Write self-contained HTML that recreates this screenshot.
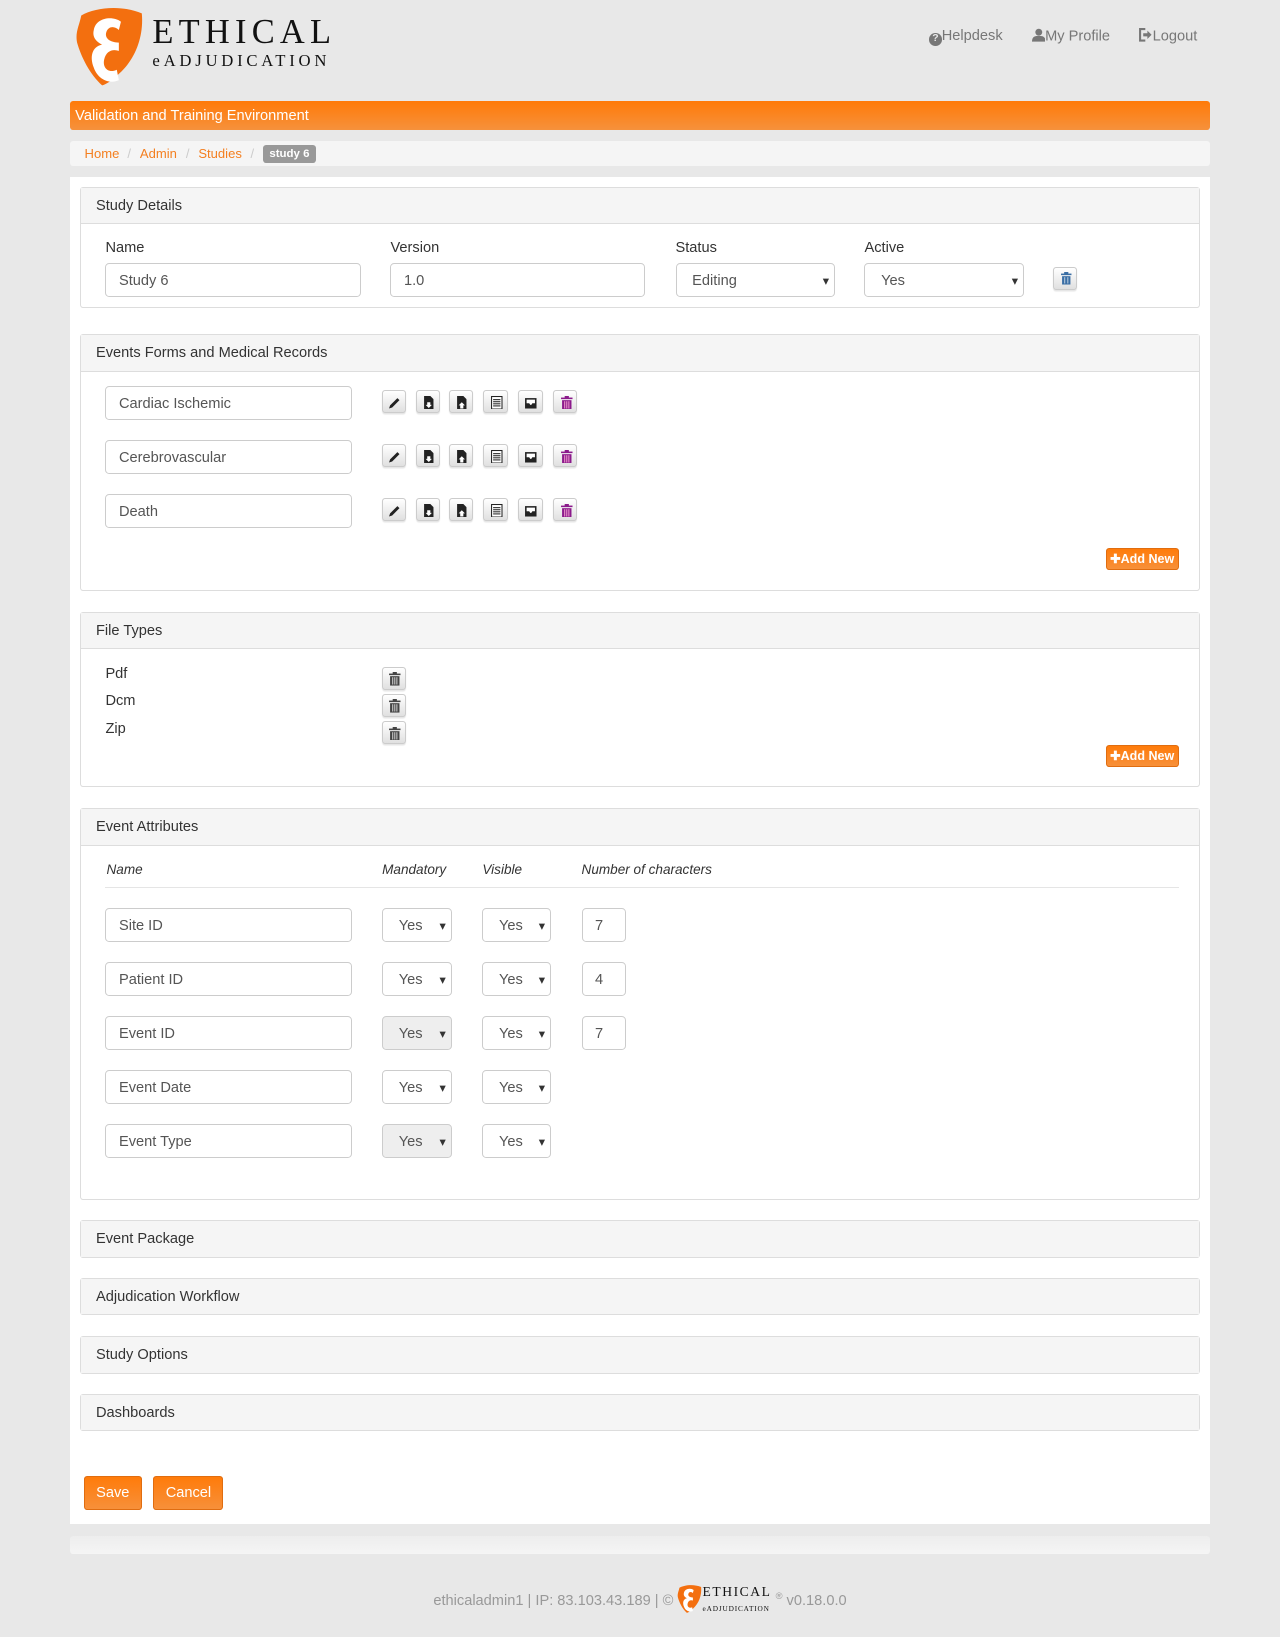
<!DOCTYPE html>
<html><head><meta charset="utf-8">
<style>
html,body{margin:0;padding:0;background:#e8e8e8;}
body{width:1280px;height:1637px;overflow:hidden;font-family:"Liberation Sans",sans-serif;}
#w{position:relative;width:1226px;height:1568px;zoom:1.04405;}
.a{position:absolute;}
.t{font-size:14px;color:#333;}
.panel{position:absolute;left:77px;width:1070px;border:1px solid #ddd;border-radius:3px;background:#fff;}
.ph{height:34px;background:#f5f5f5;border-bottom:1px solid #ddd;font-size:14px;color:#333;line-height:35px;padding-left:14px;}
.col .ph{border-bottom:none;}
.inp{position:absolute;border:1px solid #ccc;border-radius:4px;background:#fff;font-size:14px;color:#555;line-height:30px;padding-top:2px;padding-left:12px;box-sizing:border-box;height:32px;}
.sel:after{content:"▾";position:absolute;right:5px;top:2px;font-size:12px;color:#333;}
.dis{background:#eee;}
.btn{position:absolute;width:23px;height:22px;border:1px solid #ccc;border-radius:3px;background:linear-gradient(#fff,#e0e0e0);box-sizing:border-box;box-shadow:0 1px 1px rgba(0,0,0,.1);}
.btn svg{position:absolute;left:5px;top:4px;}
.add{position:absolute;left:1059px;width:70px;height:21px;background:linear-gradient(#ff7b0a,#f7903a);border:1px solid #e06d10;border-radius:3px;box-sizing:border-box;color:#fff;font-size:12px;font-weight:bold;line-height:20px;text-align:center;}
.ob{position:absolute;top:1414px;height:32px;background:linear-gradient(#ff7b0a,#f7903a);border:1px solid #e06d10;border-radius:3px;box-sizing:border-box;color:#fff;font-size:14px;line-height:32px;text-align:center;}
.it{position:absolute;top:826px;font-size:13px;font-style:italic;color:#333;}
</style></head><body><div id="w">
<svg class="a" style="left:72px;top:5px" width="66" height="78" viewBox="0 0 66 78">
<path d="M6 10 C20 2 45 0 64 8 C66 30 58 52 42 66 C36 72 30 76 26 77 C14 66 6 50 2 36 C0 26 4 20 6 10Z" fill="#f36f0f"/>
<path d="M44 16 C36 10 20 12 18 24 C16 32 22 36 26 38 C16 40 14 50 18 60 C22 72 34 76 42 72 L40 62 C32 66 26 60 28 52 C30 44 36 42 42 44 L42 36 C34 36 28 32 30 26 C32 20 38 20 42 24Z" fill="#fff"/>
</svg>
<div class="a" style="left:146px;top:12px;font-family:'Liberation Serif',serif;font-size:33px;letter-spacing:5px;color:#111;">ETHICAL</div>
<div class="a" style="left:146px;top:49px;font-family:'Liberation Serif',serif;font-size:16px;letter-spacing:3.6px;color:#111;">eADJUDICATION</div>
<div class="a" style="left:890px;top:27px;font-size:14px;color:#777;"><span style="display:inline-block;width:12px;height:12px;border-radius:50%;background:#777;color:#e8e8e8;font-size:10px;font-weight:bold;line-height:12px;text-align:center;vertical-align:-1px">?</span>Helpdesk</div>
<div class="a" style="left:988px;top:27px;font-size:14px;color:#777;"><svg width="13" height="13" viewBox="0 0 13 13" style="vertical-align:-1px"><circle cx="6.5" cy="4" r="3.3" fill="#777"/><path d="M0 13 C0 8 3 7.5 6.5 7.5 C10 7.5 13 8 13 13Z" fill="#777"/></svg>My Profile</div>
<div class="a" style="left:1090px;top:27px;font-size:14px;color:#777;"><svg width="14" height="13" viewBox="0 0 14 13" style="vertical-align:-1px"><path d="M7 1 H2 V12 H7" stroke="#777" stroke-width="2" fill="none"/><path d="M5 5 H9 V2.5 L13 6.5 L9 10.5 V8 H5Z" fill="#777"/></svg>Logout</div>
<div class="a" style="left:67px;top:97px;width:1092px;height:28px;border-radius:3px;background:linear-gradient(#ff7a08,#f6913c);color:#fff;font-size:14px;line-height:29px;text-indent:5px;">Validation and Training Environment</div>
<div class="a" style="left:67px;top:135px;width:1092px;height:24px;border-radius:3px;background:#f5f5f5;font-size:12.5px;line-height:24px;">
<span style="position:absolute;left:14px;color:#f47f20">Home</span><span style="position:absolute;left:55px;color:#ccc">/</span>
<span style="position:absolute;left:67px;color:#f47f20">Admin</span><span style="position:absolute;left:111px;color:#ccc">/</span>
<span style="position:absolute;left:123px;color:#f47f20">Studies</span><span style="position:absolute;left:173px;color:#ccc">/</span>
<span style="position:absolute;left:185px;top:4px;height:17px;line-height:18px;padding:0 6px;background:#999;border-radius:3px;color:#fff;font-weight:bold;font-size:11px">study 6</span></div>
<div class="a" style="left:67px;top:170px;width:1092px;height:1290px;background:#fff;"></div>

<div class="panel" style="top:179px;height:114px"><div class="ph">Study Details</div></div>
<div class="a t" style="left:101px;top:230px">Name</div>
<div class="a t" style="left:374px;top:230px">Version</div>
<div class="a t" style="left:647px;top:230px">Status</div>
<div class="a t" style="left:828px;top:230px">Active</div>
<div class="inp" style="left:101px;top:252px;width:245px">Study 6</div>
<div class="inp" style="left:374px;top:252px;width:244px">1.0</div>
<div class="inp sel" style="left:647px;top:252px;width:153px;padding-left:15px">Editing</div>
<div class="inp sel" style="left:828px;top:252px;width:153px;padding-left:15px">Yes</div>
<div class="btn" style="left:1009px;top:256px"><svg width="12" height="13" viewBox="0 0 12 13"><rect x="1" y="1.5" width="10" height="1.5" fill="#3a6ea5"/><rect x="4" y="0" width="4" height="2" fill="#3a6ea5"/><rect x="2" y="4" width="8" height="8" fill="#3a6ea5"/><rect x="4" y="5" width="1" height="6" fill="#bcd"/><rect x="7" y="5" width="1" height="6" fill="#bcd"/></svg></div>

<div class="panel" style="top:320px;height:244px"><div class="ph">Events Forms and Medical Records</div></div>
<div id="ev"></div>
<div class="add" style="top:525px">✚Add New</div>

<div class="panel" style="top:586px;height:166px"><div class="ph">File Types</div></div>
<div class="a t" style="left:101px;top:638px">Pdf</div>
<div class="a t" style="left:101px;top:664px">Dcm</div>
<div class="a t" style="left:101px;top:691px">Zip</div>
<div id="ft"></div>
<div class="add" style="top:714px">✚Add New</div>

<div class="panel" style="top:774px;height:373px"><div class="ph">Event Attributes</div></div>
<div class="it" style="left:102px">Name</div>
<div class="it" style="left:366px">Mandatory</div>
<div class="it" style="left:462px">Visible</div>
<div class="it" style="left:557px">Number of characters</div>
<div class="a" style="left:101px;top:850px;width:1028px;height:1px;background:#e5e5e5"></div>
<div id="ea"></div>

<div class="panel col" style="top:1169px;height:34px"><div class="ph">Event Package</div></div>
<div class="panel col" style="top:1224px;height:34px"><div class="ph">Adjudication Workflow</div></div>
<div class="panel col" style="top:1280px;height:34px"><div class="ph">Study Options</div></div>
<div class="panel col" style="top:1335px;height:34px"><div class="ph">Dashboards</div></div>

<div class="ob" style="left:80px;width:56px">Save</div>
<div class="ob" style="left:147px;width:67px">Cancel</div>

<div class="a" style="left:67px;top:1471px;width:1092px;height:17px;border-radius:3px;background:linear-gradient(#ededed,#f5f5f5)"></div>

<div class="a" style="left:0;top:1517px;width:1226px;text-align:center;font-size:14px;color:#999;">ethicaladmin1 | IP: 83.103.43.189 | © <svg width="24" height="28" viewBox="0 0 66 78" style="vertical-align:-8px"><path d="M6 10 C20 2 45 0 64 8 C66 30 58 52 42 66 C36 72 30 76 26 77 C14 66 6 50 2 36 C0 26 4 20 6 10Z" fill="#f36f0f"/><path d="M44 16 C36 10 20 12 18 24 C16 32 22 36 26 38 C16 40 14 50 18 60 C22 72 34 76 42 72 L40 62 C32 66 26 60 28 52 C30 44 36 42 42 44 L42 36 C34 36 28 32 30 26 C32 20 38 20 42 24Z" fill="#fff"/></svg><span style="display:inline-block;vertical-align:-6px;line-height:1;text-align:left;font-family:'Liberation Serif',serif;color:#111"><span style="font-size:13px;letter-spacing:1.5px">ETHICAL</span><br><span style="font-size:7px;letter-spacing:.8px">eADJUDICATION</span></span> <sup style="font-size:9px">®</sup> v0.18.0.0</div>
</div>
<script>
var icons=[
'<path d="M1 12 L2 9 L9 2 L11 4 L4 11Z" fill="#222"/>',
'<path d="M2 0 H8 L11 3 V13 H2Z" fill="#222"/><path d="M5 6 H8 V8.5 H9.5 L6.5 11.5 L3.5 8.5 H5Z" fill="#fff"/>',
'<path d="M2 0 H8 L11 3 V13 H2Z" fill="#222"/><path d="M5 12 H8 V9 H9.5 L6.5 6 L3.5 9 H5Z" fill="#fff"/>',
'<rect x="1" y="0" width="11" height="13" fill="#222"/><rect x="2" y="1" width="9" height="11" fill="#fff"/><rect x="3" y="3" width="7" height="1" fill="#222"/><rect x="3" y="5" width="7" height="1" fill="#222"/><rect x="3" y="7" width="7" height="1" fill="#222"/><rect x="3" y="9" width="7" height="1" fill="#222"/>',
'<path d="M1 2 H12 V12 H1Z" fill="#222"/><path d="M2.5 3.5 H10.5 V7 H8 L7 8.5 H6 L5 7 H2.5Z" fill="#fff"/>',
'<rect x="1" y="1.5" width="11" height="1.5" fill="#8b1a8b"/><rect x="4.5" y="0" width="4" height="2" fill="#8b1a8b"/><rect x="2" y="4" width="9" height="9" fill="#8b1a8b"/><rect x="4" y="5" width="1" height="7" fill="#e9c"/><rect x="6" y="5" width="1" height="7" fill="#e9c"/><rect x="8" y="5" width="1" height="7" fill="#e9c"/>'];
var bx=[366,398,430,463,496,530];
var names=['Cardiac Ischemic','Cerebrovascular','Death'];var h='';
names.forEach(function(n,i){var y=370+i*51.7;
h+='<div class="inp" style="left:101px;top:'+y+'px;width:236px">'+n+'</div>';
bx.forEach(function(x,j){h+='<div class="btn" style="left:'+x+'px;top:'+(y+4)+'px;width:'+(j==3||j==4?24:23)+'px"><svg width="13" height="13" viewBox="0 0 13 13">'+icons[j]+'</svg></div>';});});
document.getElementById('ev').outerHTML=h;
h='';[639,665,691].forEach(function(y){h+='<div class="btn" style="left:366px;top:'+y+'px"><svg width="13" height="13" viewBox="0 0 13 13"><rect x="1" y="1.5" width="11" height="1.5" fill="#444"/><rect x="4.5" y="0" width="4" height="2" fill="#444"/><rect x="2" y="4" width="9" height="9" fill="#444"/><rect x="4" y="5" width="1" height="7" fill="#ccc"/><rect x="6" y="5" width="1" height="7" fill="#ccc"/><rect x="8" y="5" width="1" height="7" fill="#ccc"/></svg></div>';});
document.getElementById('ft').outerHTML=h;
var rows=[['Site ID',0,'7'],['Patient ID',0,'4'],['Event ID',1,'7'],['Event Date',0,null],['Event Type',1,null]];h='';
rows.forEach(function(r,i){var y=870+i*51.7;
h+='<div class="inp" style="left:101px;top:'+y+'px;width:236px">'+r[0]+'</div>';
h+='<div class="inp sel'+(r[1]?' dis':'')+'" style="left:366px;top:'+y+'px;width:67px;padding-left:15px">Yes</div>';
h+='<div class="inp sel" style="left:462px;top:'+y+'px;width:66px;padding-left:15px">Yes</div>';
if(r[2])h+='<div class="inp" style="left:557px;top:'+y+'px;width:43px">'+r[2]+'</div>';});
document.getElementById('ea').outerHTML=h;
</script>
</body></html>
